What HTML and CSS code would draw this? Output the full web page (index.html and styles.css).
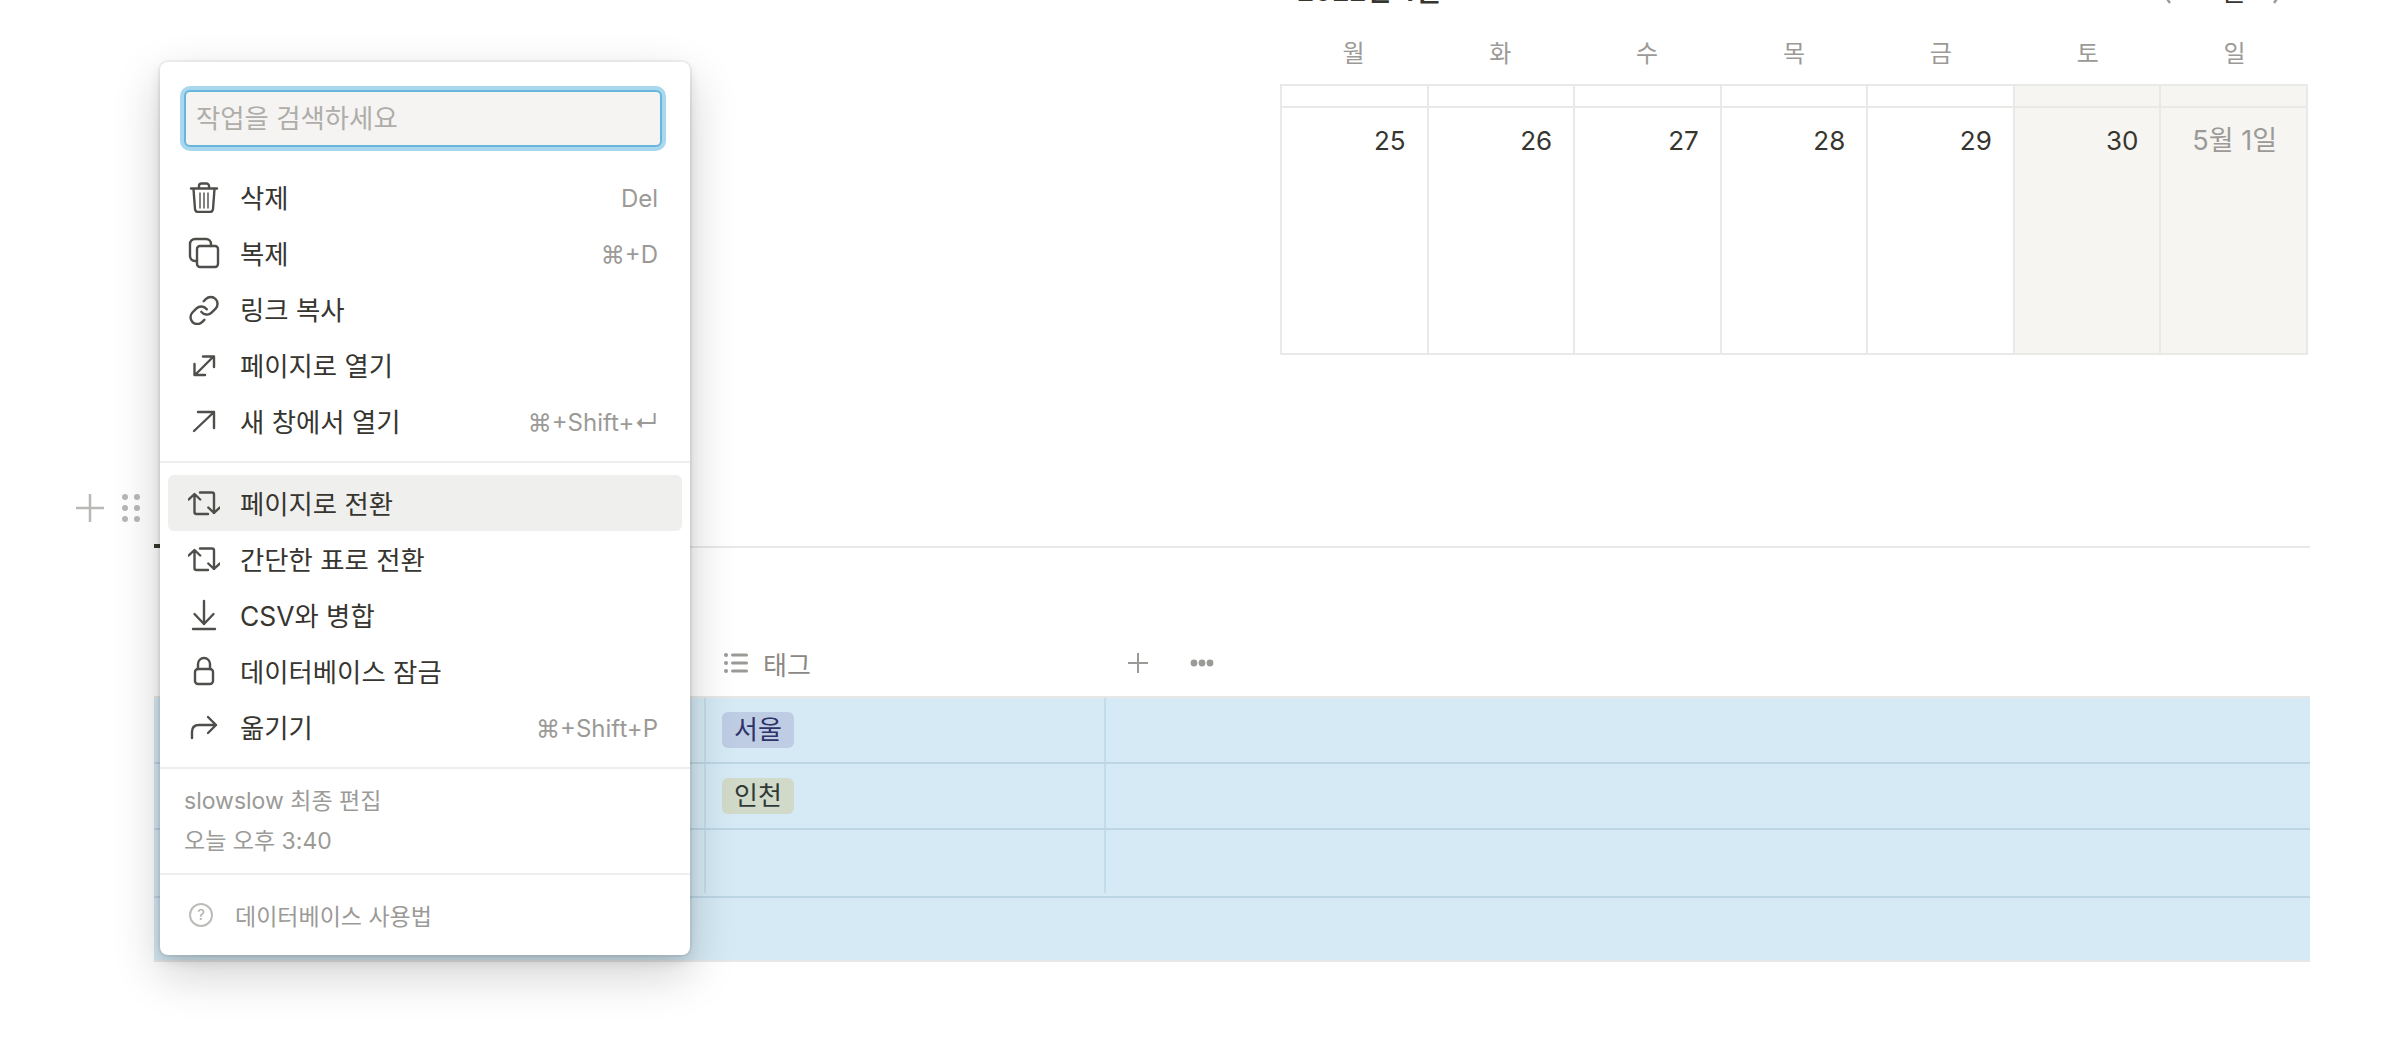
FILE: index.html
```html
<!DOCTYPE html>
<html lang="ko">
<head>
    <meta charset="UTF-8">
    <title>데이터베이스</title>
    <link rel="stylesheet" href="styles.css">
</head>
<body>
<div class="page">
    <div class="calendar">
        <div class="cal-top">
            <div class="cal-title">2022년 4월</div>
            <div class="cal-nav">
                <svg class="chev" viewBox="0 0 12 24"><path d="M10 1 2 12l8 11"/></svg>
                <span>오늘</span>
                <svg class="chev" viewBox="0 0 12 24"><path d="M2 1l8 11-8 11"/></svg>
            </div>
        </div>
        <div class="weekdays">
            <div>월</div><div>화</div><div>수</div><div>목</div><div>금</div><div>토</div><div>일</div>
        </div>
        <div class="cal-grid">
            <div class="cell-top"></div><div class="cell-top"></div><div class="cell-top"></div><div class="cell-top"></div><div class="cell-top"></div><div class="cell-top weekend"></div><div class="cell-top weekend"></div>
            <div class="day">25</div>
            <div class="day">26</div>
            <div class="day">27</div>
            <div class="day">28</div>
            <div class="day">29</div>
            <div class="day weekend">30</div>
            <div class="day weekend next-month">5월 1일</div>
        </div>
    </div>

    <div class="tabs"><div class="tab-active"></div></div>

    <div class="db-head">
        <div></div>
        <div class="db-col">
            <svg class="list-icon" viewBox="0 0 24 24"><circle cx="2" cy="4" r="2"/><circle cx="2" cy="12" r="2"/><circle cx="2" cy="20" r="2"/><rect x="7" y="2.500" width="17" height="3" rx="1.500"/><rect x="7" y="10.500" width="17" height="3" rx="1.500"/><rect x="7" y="18.500" width="17" height="3" rx="1.500"/></svg>
            <span>태그</span>
        </div>
        <div class="db-actions">
            <svg class="plus-small" viewBox="0 0 20 20"><path d="M10 0V20M0 10H20"/></svg>
            <svg class="more-icon" viewBox="0 0 24 8"><circle cx="4" cy="4" r="3.400"/><circle cx="12" cy="4" r="3.400"/><circle cx="20" cy="4" r="3.400"/></svg>
        </div>
    </div>

    <div class="db-body">
        <div class="db-row">
            <div class="db-cell"></div>
            <div class="db-cell"><span class="tag tag-blue">서울</span></div>
            <div class="db-cell"></div>
        </div>
        <div class="db-row">
            <div class="db-cell"></div>
            <div class="db-cell"><span class="tag tag-green">인천</span></div>
            <div class="db-cell"></div>
        </div>
        <div class="db-row db-row-last">
            <div class="db-cell"></div>
            <div class="db-cell"></div>
            <div class="db-cell"></div>
        </div>
        <div class="db-add"></div>
    </div>

    <!-- block handle -->
    <div class="handle">
        <svg class="handle-plus" viewBox="0 0 28 28"><path d="M14 0V28M0 14H28"/></svg>
        <svg class="handle-dots" viewBox="0 0 18 28"><circle cx="3" cy="3" r="3"/><circle cx="15" cy="3" r="3"/><circle cx="3" cy="14" r="3"/><circle cx="15" cy="14" r="3"/><circle cx="3" cy="25" r="3"/><circle cx="15" cy="25" r="3"/></svg>
    </div>

    <!-- context menu -->
    <div class="menu">
        <div class="menu-search">
            <input class="search-input" type="text" placeholder="작업을 검색하세요">
        </div>
        <div class="menu-group first">
            <div class="menu-item">
                <svg class="icon" viewBox="0 0 32 32"><path d="M3 7.500H29M11 7V5a2.500 2.500 0 0 1 2.500-2.500h5A2.500 2.500 0 0 1 21 5v2M5.500 8 7 28a3 3 0 0 0 3 3h12a3 3 0 0 0 3-3l1.500-20"/><path class="thin" d="M12 12V27M16 12V27M20 12V27"/></svg>
                <span class="label">삭제</span><span class="shortcut">Del</span>
            </div>
            <div class="menu-item">
                <svg class="icon" viewBox="0 0 32 32"><rect x="9" y="9" width="21" height="21" rx="3"/><path d="M9 24H7a5 5 0 0 1-5-5V7a5 5 0 0 1 5-5h11a5 5 0 0 1 5 5v2"/></svg>
                <span class="label">복제</span><span class="shortcut">⌘+D</span>
            </div>
            <div class="menu-item">
                <svg class="icon" viewBox="0 0 32 32"><g class="link-loops" transform="translate(-0.300 1.200) scale(1.360)"><path d="M10 13a5 5 0 0 0 7.540.54l3-3a5 5 0 0 0-7.070-7.070l-1.720 1.710"/><path d="M14 11a5 5 0 0 0-7.540-.54l-3 3a5 5 0 0 0 7.070 7.070l1.710-1.710"/></g></svg>
                <span class="label">링크 복사</span>
            </div>
            <div class="menu-item">
                <svg class="icon" viewBox="0 0 32 32"><path d="M8 25 25 8M15 7.500H26V18M6.500 15V26H17"/></svg>
                <span class="label">페이지로 열기</span>
            </div>
            <div class="menu-item">
                <svg class="icon" viewBox="0 0 32 32"><path d="M6 26 26 7M10 7H26V23"/></svg>
                <span class="label">새 창에서 열기</span><span class="shortcut">⌘+Shift+↵</span>
            </div>
        </div>
        <div class="menu-group">
            <div class="menu-item active">
                <svg class="icon" viewBox="0 0 32 32"><path d="M.8 12.500 6.500 7l5.700 5.500M6.500 8V25q0 2 2 2H20M12 5.500H24q2 0 2 2V26M20.300 20.500 26 26l5.700-5.500"/></svg>
                <span class="label">페이지로 전환</span>
            </div>
            <div class="menu-item">
                <svg class="icon" viewBox="0 0 32 32"><path d="M.8 12.500 6.500 7l5.700 5.500M6.500 8V25q0 2 2 2H20M12 5.500H24q2 0 2 2V26M20.300 20.500 26 26l5.700-5.500"/></svg>
                <span class="label">간단한 표로 전환</span>
            </div>
            <div class="menu-item">
                <svg class="icon" viewBox="0 0 32 32"><path d="M16 2V25M6.500 15 16 25l9.500-10M5 30H27"/></svg>
                <span class="label">CSV와 병합</span>
            </div>
            <div class="menu-item">
                <svg class="icon" viewBox="0 0 32 32"><path d="M10 14V9a6 6 0 0 1 12 0v5"/><rect x="7" y="14" width="18" height="15" rx="3"/></svg>
                <span class="label">데이터베이스 잠금</span>
            </div>
            <div class="menu-item">
                <svg class="icon" viewBox="0 0 32 32"><path d="M4 27V21q0-7 7-7H28M20 6l8 8-8 8"/></svg>
                <span class="label">옮기기</span><span class="shortcut">⌘+Shift+P</span>
            </div>
        </div>
        <div class="menu-info">
            <div>slowslow 최종 편집</div>
            <div>오늘 오후 3:40</div>
        </div>
        <div class="menu-help">
            <span class="help-icon">?</span>
            <span>데이터베이스 사용법</span>
        </div>
    </div>
</div>
</body>
</html>
```

FILE: styles.css
```css
body {
    margin: 0;
    background-color: #fff;
    font-family: Inter, "Noto Sans CJK KR", sans-serif;
    color: #37352f;
}

.page {
    position: relative;
    height: 1060px;
    overflow: hidden;
    padding: 0 98px 0 154px;
}

/* Calendar */
.calendar {
    margin: 0 2px 0 1126px;
}

.cal-top {
    display: flex;
    justify-content: space-between;
    height: 32px;
    margin-top: -24px;
    line-height: 32px;
    font-size: 27px;
}

.cal-title {
    margin-left: 17px;
    font-weight: 700;
}

.cal-nav {
    display: flex;
    align-items: center;
    gap: 26px;
    margin-right: 24px;
    font-size: 26px;
}

.chev {
    width: 12px;
    height: 24px;
    fill: none;
    stroke: #9b9a97;
    stroke-width: 2.4;
}

.weekdays {
    display: grid;
    grid-template-columns: repeat(7, 1fr);
    height: 46px;
    margin: 23px 0 7px;
    line-height: 46px;
    text-align: center;
    font-size: 24px;
    color: #9b9a97;
}

.cal-grid {
    display: grid;
    grid-template-columns: repeat(7, 1fr);
    grid-template-rows: 22px 245px;
    border: 2px solid #e9e9e7;
    border-left: 0;
}

.cell-top {
    border-left: 2px solid #e9e9e7;
    border-bottom: 2px solid #e9e9e7;
}

.day {
    border-left: 2px solid #e9e9e7;
    padding: 13px 21px 0 0;
    text-align: right;
    font-size: 26px;
    line-height: 40px;
}

.weekend {
    background-color: #f6f5f2;
}

.next-month {
    padding-right: 29px;
    font-size: 27px;
    color: #9b9a97;
}

/* Database */
.tabs {
    display: flex;
    align-items: flex-end;
    height: 58px;
    margin-top: 133px;
    border-bottom: 2px solid #e9e9e7;
}

.tab-active {
    width: 80px;
    height: 4px;
    margin-bottom: -2px;
    background-color: #37352f;
}

.db-head {
    display: grid;
    grid-template-columns: 550px 400px 1fr;
    height: 66px;
    margin-top: 82px;
    font-size: 26px;
    color: #8a8985;
}

.db-col {
    display: flex;
    align-items: center;
    gap: 15px;
    padding-left: 20px;
}

.list-icon {
    width: 24px;
    height: 24px;
    fill: #9b9a97;
}

.db-actions {
    display: flex;
    align-items: center;
    gap: 42px;
    padding-left: 24px;
}

.plus-small {
    width: 20px;
    height: 20px;
    fill: none;
    stroke: #9b9a97;
    stroke-width: 2;
}

.more-icon {
    width: 24px;
    height: 8px;
    fill: #9b9a97;
}

.db-body {
    border-top: 2px solid #e7e7e5;
    border-bottom: 2px solid #e7e7e5;
    background-color: #d5eaf5;
}

.db-row {
    display: grid;
    grid-template-columns: 550px 400px 1fr;
    height: 66px;
    border-bottom: 2px solid #bcd6e3;
    box-sizing: border-box;
}

.db-row-last {
    height: 68px;
    padding-bottom: 3px;
}

.db-cell {
    border-left: 2px solid #c3dce9;
    padding: 14px 0 0 16px;
}

.db-cell:first-child {
    border-left: 0;
}

.db-add {
    height: 62px;
}

.tag {
    display: inline-block;
    height: 36px;
    padding: 0 12px;
    border-radius: 6px;
    line-height: 36px;
    font-size: 26px;
}

.tag-blue {
    background-color: #bfcde4;
    color: #2f3368;
}

.tag-green {
    background-color: #d1d9c8;
    color: #2f3a38;
}

/* Block handle */
.handle {
    position: absolute;
    left: 76px;
    top: 494px;
    display: flex;
    gap: 18px;
}

.handle-plus {
    width: 28px;
    height: 28px;
    fill: none;
    stroke: #b9b8b5;
    stroke-width: 2.5;
}

.handle-dots {
    width: 18px;
    height: 28px;
    fill: #b9b8b5;
}

/* Menu */
.menu {
    position: absolute;
    left: 160px;
    top: 62px;
    width: 530px;
    border-radius: 8px;
    background-color: #fff;
    box-shadow: 0 0 0 2px rgba(15, 15, 15, 0.05), 0 6px 12px rgba(15, 15, 15, 0.1), 0 18px 48px rgba(15, 15, 15, 0.2);
}

.menu-search {
    padding: 28px 28px 0 24px;
}

.search-input {
    display: block;
    box-sizing: border-box;
    width: 100%;
    height: 57px;
    padding: 0 10px 2px;
    border: 2px solid #68b6de;
    border-radius: 6px;
    outline: 0;
    background-color: #f5f4f2;
    box-shadow: 0 0 0 4px #a9d8ee;
    font-family: inherit;
    font-size: 26.4px;
}

.search-input::placeholder {
    color: #aeadaa;
}

.menu-group {
    padding: 12px 8px 12px;
    border-bottom: 2px solid #eeeeed;
}

.menu-group.first {
    padding-top: 22px;
    padding-bottom: 12px;
}

.menu-item {
    display: flex;
    align-items: center;
    gap: 20px;
    height: 56px;
    padding: 0 24px 0 20px;
    border-radius: 6px;
    font-size: 26.4px;
}

.menu-item.active {
    background-color: #efefee;
}

.icon {
    flex: none;
    width: 32px;
    height: 32px;
    fill: none;
    stroke: #4f4e4b;
    stroke-width: 2.4;
    stroke-linecap: round;
    stroke-linejoin: round;
}

.icon .thin {
    stroke-width: 1.4;
}

.icon .link-loops {
    stroke-width: 1.8;
}

.label {
    flex: 1;
    padding-bottom: 2px;
}

.shortcut {
    padding-top: 3px;
    font-size: 24px;
    color: #9b9a97;
}

.menu-info {
    padding: 12px 24px;
    border-bottom: 2px solid #eeeeed;
    line-height: 40px;
    font-size: 23px;
    color: #9b9a97;
}

.menu-help {
    display: flex;
    align-items: center;
    gap: 22px;
    height: 64px;
    margin: 8px 0;
    padding-left: 29px;
    font-size: 23px;
    color: #9b9a97;
}

.help-icon {
    box-sizing: border-box;
    width: 24px;
    height: 24px;
    border: 2px solid #bdbcb9;
    border-radius: 50%;
    line-height: 20px;
    text-align: center;
    font-size: 15px;
    color: #aeadaa;
}
```
